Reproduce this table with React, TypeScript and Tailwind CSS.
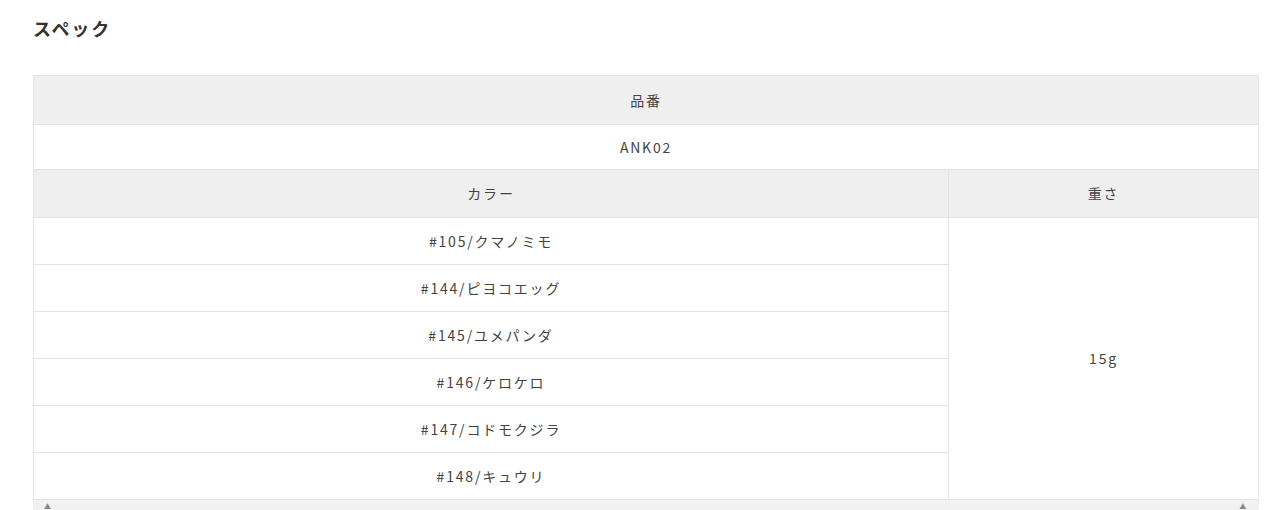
const colors = [
  "#105/クマノミモ",
  "#144/ピヨコエッグ",
  "#145/ユメパンダ",
  "#146/ケロケロ",
  "#147/コドモクジラ",
  "#148/キュウリ",
];

const font = { fontFamily: '"Noto Sans CJK JP", "Noto Sans", sans-serif' };

export default function App() {
  return (
    <div className="min-h-[510px] bg-white tracking-[1.8px] text-[#444]" style={font}>
      <div className="px-[33px] pt-[15px]">
        <h2 className="text-[18px] font-bold leading-[26px] text-[#333]">スペック</h2>
        <div className="mt-[34px] w-[1226px]">
          <table className="w-full table-fixed border-collapse text-[14px]">
            <colgroup>
              <col className="w-[915px]" />
              <col />
            </colgroup>
            <tbody>
              <tr className="h-[49px] bg-[#efefef]">
                <th colSpan={2} className="border border-[#e4e4e4] font-normal">品番</th>
              </tr>
              <tr className="h-[45px]">
                <td colSpan={2} className="border border-[#e4e4e4] text-center">ANK02</td>
              </tr>
              <tr className="h-[48px] bg-[#efefef]">
                <th className="border border-[#e4e4e4] font-normal">カラー</th>
                <th className="border border-[#e4e4e4] font-normal">重さ</th>
              </tr>
              {colors.map((c, i) => (
                <tr key={c} className="h-[47px]">
                  <td className="border border-[#e4e4e4] text-center">{c}</td>
                  {i === 0 ? (
                    <td rowSpan={colors.length} className="border border-[#e4e4e4] text-center">15g</td>
                  ) : null}
                </tr>
              ))}
            </tbody>
          </table>
          <div className="flex h-[12px] items-center justify-between bg-[#f1f1f1] px-[11px]">
            <span className="text-[7px] leading-none text-[#888]">▲</span>
            <span className="text-[7px] leading-none text-[#888]">▲</span>
          </div>
        </div>
      </div>
    </div>
  );
}
